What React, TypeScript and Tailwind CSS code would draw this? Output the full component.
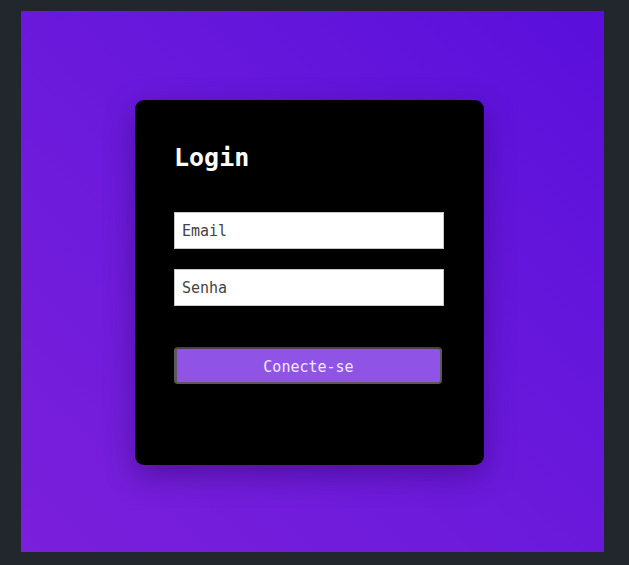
import React, { useState } from "react";

const mono = "font-['DejaVu_Sans_Mono','Liberation_Mono',monospace]";

const App = () => {
  const [email, setEmail] = useState("");
  const [senha, setSenha] = useState("");

  return (
    <div className="w-[629px] h-[565px] bg-[#22272e] pl-[21px] pt-[11px]">
      <div className="w-[583px] h-[541px] bg-gradient-to-tr from-[#7a1fdb] to-[#5a0edb] flex items-center justify-center">
        <div
          className={`w-[349px] h-[365px] bg-black rounded-[9px] shadow-[0_10px_30px_rgba(40,0,90,0.45)] px-[39px] pt-[42px] flex flex-col -ml-[6px] mt-[2px] ${mono}`}
        >
          <h1 className="text-[25px] leading-[32px] font-bold text-white">Login</h1>

          <form className="flex flex-col mt-[38px]" onSubmit={(e) => e.preventDefault()}>
            <input
              type="email"
              placeholder="Email"
              value={email}
              onChange={(e) => setEmail(e.target.value)}
              className="w-[270px] h-[37px] bg-white border border-[#c8c8c8] px-[7px] text-[15px] text-[#333] placeholder:text-[#444] outline-none"
            />
            <input
              type="password"
              placeholder="Senha"
              value={senha}
              onChange={(e) => setSenha(e.target.value)}
              className="w-[270px] h-[37px] mt-[20px] bg-white border border-[#c8c8c8] px-[7px] text-[15px] text-[#333] placeholder:text-[#444] outline-none"
            />
            <button
              type="submit"
              className="w-[268px] h-[37px] mt-[41px] bg-[#8f54e6] border-2 border-t-[#444] border-l-[3px] border-[#5a5a5a] rounded-[4px] pt-[3px] text-[15px] text-[#f0e8ff]"
            >
              Conecte-se
            </button>
          </form>
        </div>
      </div>
    </div>
  );
};

export default App;
